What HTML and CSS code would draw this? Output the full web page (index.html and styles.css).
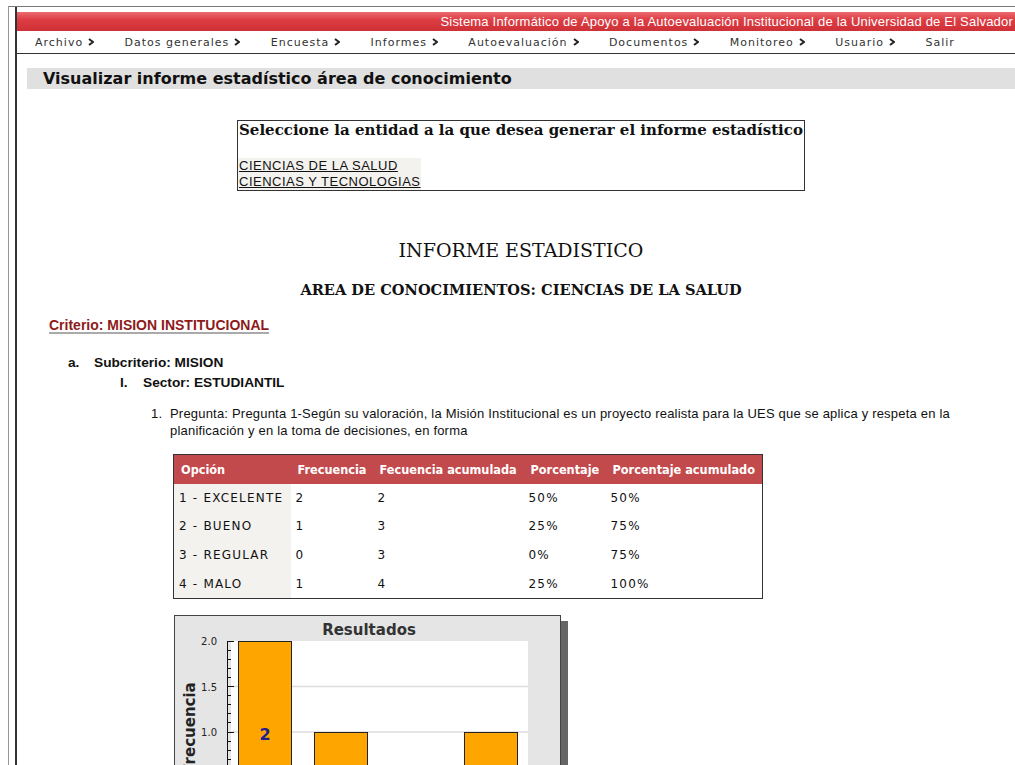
FILE: index.html
```html
<!DOCTYPE html>
<html lang="es">
<head>
  <meta charset="UTF-8">
  <title>Visualizar informe estadístico área de conocimiento</title>
  <link rel="stylesheet" href="styles.css">
</head>
<body>
<div class="frame">
  <div class="gutter"></div>
  <div class="main">
    <!-- cabecera -->
    <div class="banner">Sistema Informático de Apoyo a la Autoevaluación Institucional de la Universidad de El Salvador</div>
    <ul class="menu">
      <li>Archivo<svg class="chev" viewBox="0 0 6 8"><path d="M1 1 L5 4 L1 7"/></svg></li>
      <li>Datos generales<svg class="chev" viewBox="0 0 6 8"><path d="M1 1 L5 4 L1 7"/></svg></li>
      <li>Encuesta<svg class="chev" viewBox="0 0 6 8"><path d="M1 1 L5 4 L1 7"/></svg></li>
      <li>Informes<svg class="chev" viewBox="0 0 6 8"><path d="M1 1 L5 4 L1 7"/></svg></li>
      <li>Autoevaluación<svg class="chev" viewBox="0 0 6 8"><path d="M1 1 L5 4 L1 7"/></svg></li>
      <li>Documentos<svg class="chev" viewBox="0 0 6 8"><path d="M1 1 L5 4 L1 7"/></svg></li>
      <li>Monitoreo<svg class="chev" viewBox="0 0 6 8"><path d="M1 1 L5 4 L1 7"/></svg></li>
      <li>Usuario<svg class="chev" viewBox="0 0 6 8"><path d="M1 1 L5 4 L1 7"/></svg></li>
      <li>Salir</li>
    </ul>

    <div class="content">
      <h2 class="page-title">Visualizar informe estadístico área de conocimiento</h2>

      <!-- selección de entidad -->
      <div class="entity-box">
        <h3>Seleccione la entidad a la que desea generar el informe estadístico</h3>
        <div class="entity-links">
          <a href="#">CIENCIAS DE LA SALUD</a>
          <a href="#">CIENCIAS Y TECNOLOGIAS</a>
        </div>
      </div>

      <h1 class="report-title">INFORME ESTADISTICO</h1>
      <h4 class="report-area">AREA DE CONOCIMIENTOS: CIENCIAS DE LA SALUD</h4>

      <p class="criterio"><span>Criterio: MISION INSTITUCIONAL</span></p>

      <div class="row subcriterio"><span class="num">a.</span><span>Subcriterio: MISION</span></div>
      <div class="row sector"><span class="num">I.</span><span>Sector: ESTUDIANTIL</span></div>

      <div class="row pregunta">
        <span class="num">1.</span>
        <div class="pregunta-body">
          <p>Pregunta: Pregunta 1-Según su valoración, la Misión Institucional es un proyecto realista para la UES que se aplica y respeta en la planificación y en la toma de decisiones, en forma</p>

          <table class="stats">
            <colgroup>
              <col class="c1"><col class="c2"><col class="c3"><col class="c4"><col class="c5">
            </colgroup>
            <tr>
              <th>Opción</th><th>Frecuencia</th><th>Fecuencia acumulada</th><th>Porcentaje</th><th>Porcentaje acumulado</th>
            </tr>
            <tr><td>1 - EXCELENTE</td><td>2</td><td>2</td><td>50%</td><td>50%</td></tr>
            <tr><td>2 - BUENO</td><td>1</td><td>3</td><td>25%</td><td>75%</td></tr>
            <tr><td>3 - REGULAR</td><td>0</td><td>3</td><td>0%</td><td>75%</td></tr>
            <tr><td>4 - MALO</td><td>1</td><td>4</td><td>25%</td><td>100%</td></tr>
          </table>

          <!-- gráfico de resultados -->
          <div class="chart">
            <svg width="385" height="300" viewBox="0 0 385 300">
              <text class="chart-title" x="194" y="19" text-anchor="middle">Resultados</text>
              <rect x="56" y="25" width="297" height="182" fill="#fff"/>
              <g stroke="#dcdcdc" stroke-width="1.5">
                <line x1="56" y1="70.5" x2="353" y2="70.5"/>
                <line x1="56" y1="116" x2="353" y2="116"/>
                <line x1="56" y1="161.5" x2="353" y2="161.5"/>
              </g>
              <g stroke="#111" stroke-width="1">
                <line x1="52.5" y1="25" x2="52.5" y2="207"/>
                <line x1="52" y1="25.5" x2="59" y2="25.5"/>
                <line x1="52" y1="34.5" x2="56" y2="34.5"/>
                <line x1="52" y1="43.5" x2="56" y2="43.5"/>
                <line x1="52" y1="52.5" x2="56" y2="52.5"/>
                <line x1="52" y1="61.5" x2="56" y2="61.5"/>
                <line x1="52" y1="70.5" x2="59" y2="70.5"/>
                <line x1="52" y1="79.5" x2="56" y2="79.5"/>
                <line x1="52" y1="88.5" x2="56" y2="88.5"/>
                <line x1="52" y1="97.5" x2="56" y2="97.5"/>
                <line x1="52" y1="106.5" x2="56" y2="106.5"/>
                <line x1="52" y1="116.5" x2="59" y2="116.5"/>
                <line x1="52" y1="125.5" x2="56" y2="125.5"/>
                <line x1="52" y1="134.5" x2="56" y2="134.5"/>
                <line x1="52" y1="143.5" x2="56" y2="143.5"/>
                <line x1="52" y1="152.5" x2="56" y2="152.5"/>
                <line x1="52" y1="161.5" x2="59" y2="161.5"/>
              </g>
              <g class="tick-label" text-anchor="end">
                <text x="42" y="29">2.0</text>
                <text x="42" y="75">1.5</text>
                <text x="42" y="120">1.0</text>
                <text x="42" y="166">0.5</text>
              </g>
              <g fill="#ffa500" stroke="#222" stroke-width="1">
                <rect x="63.5" y="25.5" width="53" height="182"/>
                <rect x="139.5" y="116.5" width="53" height="91"/>
                <rect x="289.5" y="116.5" width="53" height="91"/>
              </g>
              <text class="bar-label" x="90" y="124" text-anchor="middle">2</text>
              <text class="axis-title" transform="translate(20,112) rotate(-90)" text-anchor="middle">Frecuencia</text>
            </svg>
          </div>
        </div>
      </div>
    </div>
  </div>
</div>
</body>
</html>
```

FILE: styles.css
```css
/* base */
body {
  margin: 0;
  padding: 6px 0 0 8px;
  background: #fff;
  color: #111;
  font-family: "Liberation Sans", Arial, sans-serif;
  font-size: 12px;
  overflow: hidden;
}

.frame {
  display: flex;
  border-top: 1px solid #777;
  border-left: 1px solid #999;
  min-height: 760px;
}

.gutter {
  width: 6px;
  background: #fff;
}

.main {
  flex: 1;
  border-left: 2px solid #333;
  padding-top: 5px;
}

/* cabecera roja */
.banner {
  height: 19px;
  line-height: 19px;
  text-align: right;
  padding-right: 2px;
  color: #fff;
  font-size: 13px;
  letter-spacing: 0.2px;
  background: linear-gradient(to bottom, #ec6b70 0%, #dd3e44 40%, #cd3036 100%);
  white-space: nowrap;
}

/* menú */
.menu {
  list-style: none;
  margin: 0;
  padding: 0 0 0 18px;
  height: 22px;
  border-bottom: 1px solid #333;
  display: flex;
  align-items: center;
  gap: 30.4px;
  font-family: "DejaVu Sans", sans-serif;
  font-size: 11px;
  letter-spacing: 1px;
  color: #333;
}

.menu li {
  display: flex;
  align-items: center;
  white-space: nowrap;
}

.chev {
  width: 6px;
  height: 8px;
  margin-left: 5px;
  fill: none;
  stroke: #222;
  stroke-width: 2;
}

.content {
  padding-left: 10px;
}

.page-title {
  margin: 14px 0 0;
  height: 21px;
  line-height: 21px;
  padding-left: 16px;
  background: #e0e0e0;
  font-family: "DejaVu Sans", sans-serif;
  font-size: 16px;
  font-weight: bold;
  color: #111;
}

/* selección de entidad */
.entity-box {
  display: table;
  margin: 31px auto 0;
  border: 1px solid #333;
}

.entity-box h3 {
  margin: 0 0 18px;
  padding: 0 1px;
  line-height: 19px;
  font-family: "DejaVu Serif", serif;
  font-size: 15px;
  font-weight: bold;
  white-space: nowrap;
}

.entity-links {
  display: inline-block;
  background: #f3f2ef;
  padding-left: 1px;
}

.entity-links a {
  display: block;
  line-height: 16px;
  color: #111;
  font-size: 13px;
  letter-spacing: 0.5px;
}

/* títulos del informe */
.report-title {
  margin: 48px 0 0;
  text-align: center;
  font-family: "DejaVu Serif", serif;
  font-size: 19px;
  font-weight: normal;
  line-height: 22px;
}

.report-area {
  margin: 21px 0 0;
  text-align: center;
  font-family: "DejaVu Serif", serif;
  font-size: 14.6px;
  line-height: 16px;
}

.criterio {
  margin: 19px 0 0 22px;
  line-height: 16px;
  font-size: 14px;
  font-weight: bold;
  color: #8e1b1b;
}

.criterio span {
  text-decoration: underline;
  text-decoration-color: #aaa;
  text-decoration-thickness: 2px;
  text-underline-offset: 2px;
}

.row {
  display: flex;
  line-height: 16px;
}

.subcriterio,
.sector {
  font-size: 13.7px;
  font-weight: bold;
}

.subcriterio {
  margin-top: 22px;
  padding-left: 41px;
}

.subcriterio .num {
  width: 26px;
}

.sector {
  margin-top: 4px;
  padding-left: 93px;
}

.sector .num {
  width: 23px;
}

.pregunta {
  margin-top: 14px;
  padding-left: 124px;
  line-height: 17px;
  font-size: 13px;
  letter-spacing: 0.2px;
}

.pregunta .num {
  width: 19px;
  flex: none;
}

.pregunta-body {
  flex: 1;
  padding-right: 40px;
}

.pregunta-body p {
  margin: 0;
}

/* tabla de resultados */
.stats {
  margin: 15px 0 0 3px;
  border-collapse: collapse;
  border: 1px solid #333;
  table-layout: fixed;
  width: 589px;
  letter-spacing: 0;
}

.stats col.c1 { width: 117px; }
.stats col.c2 { width: 82px; }
.stats col.c3 { width: 151px; }
.stats col.c4 { width: 82px; }
.stats col.c5 { width: 157px; }

.stats th {
  height: 29px;
  padding: 0 0 0 7px;
  background: #c34a4c;
  color: #fff;
  text-align: left;
  font-family: "DejaVu Sans Condensed", "DejaVu Sans", sans-serif;
  font-stretch: condensed;
  font-size: 12.6px;
  font-weight: bold;
  white-space: nowrap;
}

.stats td {
  height: 28.6px;
  padding: 0 0 0 5px;
  font-family: "DejaVu Sans", sans-serif;
  font-size: 12px;
  letter-spacing: 1.2px;
  color: #111;
  white-space: nowrap;
}

.stats td:first-child {
  background: #f3f2ef;
}

/* gráfico */
.chart {
  margin: 16px 0 0 4px;
  width: 385px;
  height: 300px;
  border: 1px solid #444;
  background: #e5e5e5;
  box-shadow: 7px 6px 0 #666;
  letter-spacing: 0;
}

.chart svg {
  display: block;
  font-family: "DejaVu Sans", sans-serif;
}

.chart-title {
  font-size: 15px;
  font-weight: bold;
  fill: #333;
}

.tick-label {
  font-size: 10px;
  fill: #222;
}

.bar-label {
  font-size: 16px;
  font-weight: bold;
  fill: #1f1f8f;
}

.axis-title {
  font-size: 15px;
  font-weight: bold;
  fill: #222;
}
```
